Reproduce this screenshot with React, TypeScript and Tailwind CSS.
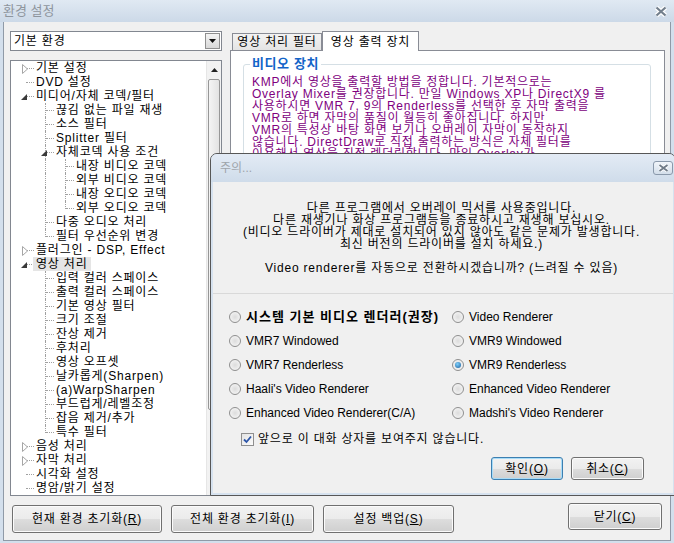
import React from 'react';

type Node = { t: string; l: number; c?: 'open' | 'closed'; sel?: boolean };

const TREE: Node[] = [
  { t: '기본 설정', l: 0, c: 'closed' },
  { t: 'DVD 설정', l: 0 },
  { t: '미디어/자체 코덱/필터', l: 0, c: 'open' },
  { t: '끊김 없는 파일 재생', l: 1 },
  { t: '소스 필터', l: 1 },
  { t: 'Splitter 필터', l: 1 },
  { t: '자체코덱 사용 조건', l: 1, c: 'open' },
  { t: '내장 비디오 코덱', l: 2 },
  { t: '외부 비디오 코덱', l: 2 },
  { t: '내장 오디오 코덱', l: 2 },
  { t: '외부 오디오 코덱', l: 2 },
  { t: '다중 오디오 처리', l: 1 },
  { t: '필터 우선순위 변경', l: 1 },
  { t: '플러그인 - DSP, Effect', l: 0, c: 'closed' },
  { t: '영상 처리', l: 0, c: 'open', sel: true },
  { t: '입력 컬러 스페이스', l: 1 },
  { t: '출력 컬러 스페이스', l: 1 },
  { t: '기본 영상 필터', l: 1 },
  { t: '크기 조절', l: 1 },
  { t: '잔상 제거', l: 1 },
  { t: '후처리', l: 1 },
  { t: '영상 오프셋', l: 1 },
  { t: '날카롭게(Sharpen)', l: 1 },
  { t: '(a)WarpSharpen', l: 1 },
  { t: '부드럽게/레벨조정', l: 1 },
  { t: '잡음 제거/추가', l: 1 },
  { t: '특수 필터', l: 1 },
  { t: '음성 처리', l: 0, c: 'closed' },
  { t: '자막 처리', l: 0, c: 'closed' },
  { t: '시각화 설정', l: 0 },
  { t: '명암/밝기 설정', l: 0 },
];

const INFO = [
  'KMP에서 영상을 출력할 방법을 정합니다. 기본적으로는',
  'Overlay Mixer를 권장합니다. 만일 Windows XP나 DirectX9 를',
  '사용하시면 VMR 7, 9의 Renderless를 선택한 후 자막 출력을',
  'VMR로 하면 자막의 품질이 월등히 좋아집니다. 하지만',
  'VMR의 특성상 바탕 화면 보기나 오버레이 자막이 동작하지',
  '않습니다. DirectDraw로 직접 출력하는 방식은 자체 필터를',
  '이용해서 영상을 직접 렌더링합니다. 만일 Overlay가',
  '동작하지 않는다면 다른 방식을 선택해 보십시오.',
];

const MESSAGE = [
  '다른 프로그램에서 오버레이 믹서를 사용중입니다.',
  '다른 재생기나 화상 프로그램등을 종료하시고 재생해 보십시오.',
  '(비디오 드라이버가 제대로 설치되어 있지 않아도 같은 문제가 발생합니다.',
  '최신 버전의 드라이버를 설치 하세요.)',
  '',
  'Video renderer를 자동으로 전환하시겠습니까? (느려질 수 있음)',
];

const RENDERERS: { t: string; bold?: boolean; checked?: boolean }[] = [
  { t: '시스템 기본 비디오 렌더러(권장)', bold: true },
  { t: 'Video Renderer' },
  { t: 'VMR7 Windowed' },
  { t: 'VMR9 Windowed' },
  { t: 'VMR7 Renderless' },
  { t: 'VMR9 Renderless', checked: true },
  { t: "Haali's Video Renderer" },
  { t: 'Enhanced Video Renderer' },
  { t: 'Enhanced Video Renderer(C/A)' },
  { t: "Madshi's Video Renderer" },
];

function hasNext(i: number) {
  const l = TREE[i].l;
  for (let j = i + 1; j < TREE.length; j++) {
    if (TREE[j].l < l) return false;
    if (TREE[j].l === l) return true;
  }
  return false;
}

function ancestorHasNext(i: number, a: number) {
  for (let j = i - 1; j >= 0; j--) {
    if (TREE[j].l === a) return hasNext(j);
    if (TREE[j].l < a) return false;
  }
  return false;
}

const vx = (l: number) => 14 + 20 * l;

function TreeRow({ node, i }: { node: Node; i: number }) {
  const L = node.l;
  const guides: React.ReactNode[] = [];
  for (let a = 1; a < L; a++) {
    if (ancestorHasNext(i, a))
      guides.push(
        <span
          key={a}
          className="absolute top-0 h-[14px] border-l border-dotted border-[#a0a0a0]"
          style={{ left: vx(a) }}
        />
      );
  }
  if (L >= 1)
    guides.push(
      <span
        key="own"
        className={`absolute top-0 border-l border-dotted border-[#a0a0a0] ${hasNext(i) ? 'h-[14px]' : 'h-[8px]'}`}
        style={{ left: vx(L) }}
      />
    );

  return (
    <div className="relative flex h-[14px] items-center" style={{ paddingLeft: 22 + 20 * L }}>
      {guides}
      <span
        className="absolute top-[7px] w-[8px] border-t border-dotted border-[#a0a0a0]"
        style={{ left: vx(L) + 1 }}
      />
      {node.c === 'closed' && (
        <svg className="absolute top-[3px]" style={{ left: vx(L) - 3 }} width="7" height="10" viewBox="0 0 7 10">
          <path d="M0.5 0.5 L5.5 5 L0.5 9.5 Z" fill="#fff" stroke="#a6a6a6" />
        </svg>
      )}
      {node.c === 'open' && (
        <svg className="absolute top-[5px]" style={{ left: vx(L) - 4 }} width="7" height="7" viewBox="0 0 7 7">
          <path d="M6 0 L6 6 L0 6 Z" fill="#3a3a3a" />
        </svg>
      )}
      <span
        className={`relative whitespace-nowrap px-[3px] leading-[14px] ${node.sel ? 'bg-[#e5e5e5]' : ''}`}
      >
        {node.t}
      </span>
    </div>
  );
}

function CloseGlyph() {
  return (
    <svg width="14" height="11" viewBox="0 0 14 11">
      <path d="M2.5 1.5 L11.5 9.5 M11.5 1.5 L2.5 9.5" stroke="#fff" strokeWidth="4.5" />
      <path d="M2.5 1.5 L11.5 9.5 M11.5 1.5 L2.5 9.5" stroke="#737f8c" strokeWidth="2.2" />
    </svg>
  );
}

function WinButton({
  children,
  className = '',
  focused,
}: {
  children: React.ReactNode;
  className?: string;
  focused?: boolean;
}) {
  return (
    <button
      type="button"
      className={`flex shrink-0 items-center justify-center rounded-[3px] border bg-[linear-gradient(#f2f2f2_0%,#ebebeb_50%,#dddddd_51%,#cfcfcf_100%)] leading-[14px] text-black ${
        focused
          ? 'border-[#3c7fb1] shadow-[inset_0_0_0_1px_#a8dcf8]'
          : 'border-[#707070] shadow-[inset_0_0_0_1px_#fbfbfb]'
      } ${className}`}
    >
      {children}
    </button>
  );
}

function Radio({ checked }: { checked?: boolean }) {
  return (
    <span className="flex h-[12px] w-[12px] shrink-0 items-center justify-center rounded-full border border-[#8f8f8f] bg-[radial-gradient(circle_at_50%_50%,#dcdcdc,#fafafa)]">
      {checked && (
        <span className="h-[6px] w-[6px] rounded-full bg-[radial-gradient(circle_at_40%_35%,#7fd0fb,#1b5e9e)]" />
      )}
    </span>
  );
}

function Checkbox() {
  return (
    <span className="flex h-[13px] w-[13px] shrink-0 items-center justify-center border border-[#8f8f8f] bg-[linear-gradient(135deg,#e4e4e4,#fbfbfb)]">
      <svg width="9" height="9" viewBox="0 0 9 9">
        <path d="M1 4.5 L3.5 7 L8 1.5" fill="none" stroke="#2c55a8" strokeWidth="1.8" />
      </svg>
    </span>
  );
}

function AlertDialog() {
  return (
    <div className="absolute left-[210px] top-[153px] flex h-[343px] w-[466px] flex-col rounded-t-[7px] border border-[#575757] bg-[#d6e2ef]">
      <div className="relative flex h-[28px] items-center rounded-t-[6px] bg-[linear-gradient(#e3ebf5,#cfdcea)] pl-[9px]">
        <span className="text-[12px] tracking-normal text-[#9ea4ab]">주의...</span>
        <span className="absolute right-[2px] top-[7px] flex h-[14px] w-[20px] items-center justify-center rounded-[3px] border border-[#8a99ab] bg-[linear-gradient(#f1f5fa,#d3deea)]">
          <svg width="11" height="8" viewBox="0 0 11 8">
            <path d="M1.5 1 L9.5 7 M9.5 1 L1.5 7" stroke="#fff" strokeWidth="3.5" />
            <path d="M1.5 1 L9.5 7 M9.5 1 L1.5 7" stroke="#6f7b88" strokeWidth="1.8" />
          </svg>
        </span>
      </div>
      <div className="mx-[2px] mb-[2px] flex flex-1 flex-col bg-[#f0f0f0]">
        <div className="h-[112px] border-b border-[#d9d9d9] pr-[3px] pt-[20px] text-center">
          {MESSAGE.map((m, i) => (
            <div key={i} className="h-[12px] whitespace-nowrap leading-[12px]">
              {m}
            </div>
          ))}
        </div>
        <div className="grid grid-cols-[223px_1fr] pl-[16px] pt-[11px]">
          {RENDERERS.map((r) => (
            <div key={r.t} className="flex h-[24px] items-center gap-[5px]">
              <Radio checked={r.checked} />
              <span
                className={`whitespace-nowrap ${r.bold ? 'text-[13px] font-bold tracking-[1px]' : 'tracking-normal'}`}
              >
                {r.t}
              </span>
            </div>
          ))}
        </div>
        <div className="mt-[7px] flex h-[14px] items-center gap-[4px] pl-[28px]">
          <Checkbox />
          <span className="whitespace-nowrap leading-[14px]">앞으로 이 대화 상자를 보여주지 않습니다.</span>
        </div>
        <div className="mt-[11px] flex justify-end gap-[8px] pr-[29px]">
          <WinButton focused className="h-[23px] w-[72px]">
            확인(<span className="underline">O</span>)
          </WinButton>
          <WinButton className="h-[23px] w-[73px]">
            취소(<span className="underline">C</span>)
          </WinButton>
        </div>
      </div>
    </div>
  );
}

export default function App() {
  return (
    <div className="relative h-[543px] w-[674px] overflow-hidden bg-[#d3dfec] font-['Liberation_Sans','Noto_Sans_CJK_KR',sans-serif] text-[12px] tracking-[0.8px] text-black">
      <div className="flex h-[22px] items-center justify-between bg-[linear-gradient(#e0e9f3,#ccd9e8)] pl-[3px] pr-[6px]">
        <span className="text-[13px] tracking-normal text-[#8e959d]">환경 설정</span>
        <CloseGlyph />
      </div>

      <div className="mx-[3px] flex h-[519px] flex-col border-x border-b border-[#8f9aa7] bg-[#f0f0f0] pl-[6px] pr-[5px] pt-[9px]">
        <div className="flex gap-[8px]">
          <div className="flex w-[212px] flex-col gap-[9px]">
            <div className="flex h-[20px] items-center border border-[#828790] bg-white">
              <span className="flex-1 pl-[3px] leading-[14px]">기본 환경</span>
              <span className="m-[1px] flex h-[16px] w-[15px] items-center justify-center border border-[#8f8f8f] bg-[linear-gradient(#f4f4f4,#d8d8d8)]">
                <svg width="7" height="4" viewBox="0 0 7 4">
                  <path d="M0 0 L7 0 L3.5 4 Z" fill="#111" />
                </svg>
              </span>
            </div>
            <div className="flex h-[436px] border border-[#828790] bg-white">
              <div className="flex-1 overflow-hidden">
                {TREE.map((n, i) => (
                  <TreeRow key={n.t} node={n} i={i} />
                ))}
              </div>
              <div className="flex w-[15px] flex-col border-l border-[#e6e6e6] bg-[#f2f2f2]">
                <div className="flex h-[17px] items-center justify-center">
                  <svg width="7" height="4" viewBox="0 0 7 4">
                    <path d="M3.5 0 L7 4 L0 4 Z" fill="#222" />
                  </svg>
                </div>
                <div className="mx-[1px] mt-[1px] h-[331px] rounded-[2px] border border-[#979797] bg-[linear-gradient(90deg,#f4f4f4,#e3e3e3)]" />
              </div>
            </div>
          </div>

          <div className="flex w-[435px] flex-col">
            <div className="flex h-[19px] items-end pl-[2px]">
              <div className="flex h-[17px] w-[90px] items-center justify-center border-x border-t border-[#898c95] bg-[linear-gradient(#f3f3f3,#e4e4e4)] leading-[14px]">
                영상 처리 필터
              </div>
              <div className="relative z-10 -mb-px flex h-[20px] w-[97px] items-center justify-center border-x border-t border-[#898c95] bg-white leading-[14px]">
                영상 출력 장치
              </div>
            </div>
            <div className="h-[446px] overflow-hidden border border-[#898c95] bg-white">
              <fieldset className="ml-[12px] mt-[6px] h-[200px] w-[408px] rounded-[3px] border border-[#d5dfe5] px-[6px]">
                <legend className="px-[2px] text-[13px] font-bold leading-[14px] tracking-[0.6px] text-[#1264c8]">
                  비디오 장치
                </legend>
                <div className="mt-[5px] pl-[2px] tracking-[0.75px] text-[#800080]">
                  {INFO.map((line) => (
                    <div key={line} className="h-[12px] whitespace-nowrap leading-[12px]">
                      {line}
                    </div>
                  ))}
                </div>
              </fieldset>
            </div>
          </div>
        </div>

        <div className="mt-[7px] flex items-start pl-[2px] pr-[3px]">
          <WinButton className="mt-[2px] h-[28px] w-[150px]">
            현재 환경 초기화(<span className="underline">R</span>)
          </WinButton>
          <WinButton className="ml-[9px] mt-[2px] h-[28px] w-[143px]">
            전체 환경 초기화(<span className="underline">I</span>)
          </WinButton>
          <WinButton className="ml-[9px] mt-[2px] h-[28px] w-[131px]">
            설정 백업(<span className="underline">S</span>)
          </WinButton>
          <WinButton className="ml-auto h-[27px] w-[94px]">
            닫기(<span className="underline">C</span>)
          </WinButton>
        </div>
      </div>

      <AlertDialog />
    </div>
  );
}
